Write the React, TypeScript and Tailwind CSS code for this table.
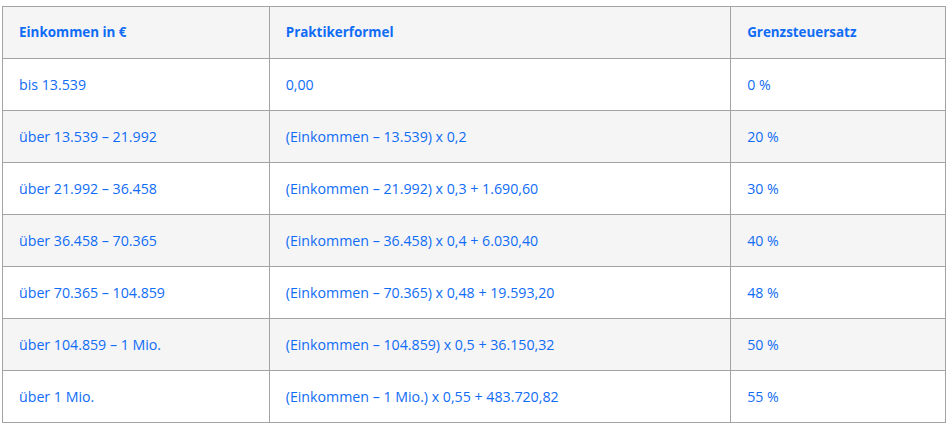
import React from 'react';

const rows = [
  ['bis 13.539', '0,00', '0 %'],
  ['über 13.539 – 21.992', '(Einkommen – 13.539) x 0,2', '20 %'],
  ['über 21.992 – 36.458', '(Einkommen – 21.992) x 0,3 + 1.690,60', '30 %'],
  ['über 36.458 – 70.365', '(Einkommen – 36.458) x 0,4 + 6.030,40', '40 %'],
  ['über 70.365 – 104.859', '(Einkommen – 70.365) x 0,48 + 19.593,20', '48 %'],
  ['über 104.859 – 1 Mio.', '(Einkommen – 104.859) x 0,5 + 36.150,32', '50 %'],
  ['über 1 Mio.', '(Einkommen – 1 Mio.) x 0,55 + 483.720,82', '55 %'],
];

const App: React.FC = () => {
  return (
    <div className="min-h-screen bg-white pt-[6px] pl-[2px]" style={{ fontFamily: '"Open Sans", Lato, sans-serif' }}>
      <table className="w-[944px] border-collapse text-[14.2px] text-[#0f6cf5]">
        <colgroup>
          <col className="w-[267px]" />
          <col className="w-[462px]" />
          <col className="w-[215px]" />
        </colgroup>
        <thead>
          <tr className="h-[52px] bg-[#f5f5f5]">
            <th className="border border-[#a3a3a3] px-4 text-left text-[13.4px] font-bold">Einkommen in €</th>
            <th className="border border-[#a3a3a3] px-4 text-left text-[13.4px] font-bold">Praktikerformel</th>
            <th className="border border-[#a3a3a3] px-4 text-left text-[13.4px] font-bold">Grenzsteuersatz</th>
          </tr>
        </thead>
        <tbody>
          {rows.map((r, i) => (
            <tr key={i} className={`h-[52px] ${i % 2 === 1 ? 'bg-[#f5f5f5]' : 'bg-white'}`}>
              {r.map((c, j) => (
                <td key={j} className="border border-[#a3a3a3] px-4 text-left">{c}</td>
              ))}
            </tr>
          ))}
        </tbody>
      </table>
    </div>
  );
};

export default App;
